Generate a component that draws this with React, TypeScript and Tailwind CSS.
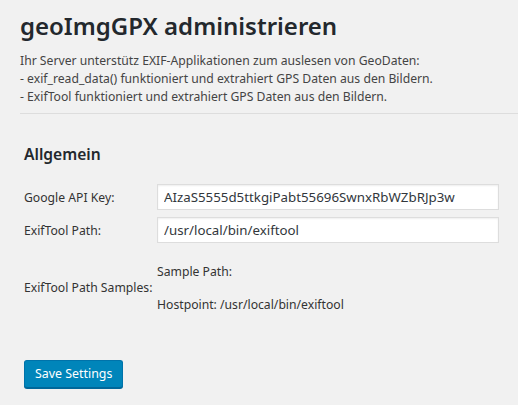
import React from 'react';

const font = "font-['Noto_Sans',sans-serif]";

function FieldRow({ label, value }: { label: string; value: string }) {
  return (
    <div className="flex items-center">
      <label className="w-[133px] pt-[3px] text-[12.2px] text-[#333]">{label}</label>
      <input
        readOnly
        value={value}
        className="h-[26px] w-[342px] border border-[#ddd] bg-white px-[6px] text-[13.3px] text-[#32373c] shadow-[inset_0_1px_2px_rgba(0,0,0,0.07)] outline-none"
      />
    </div>
  );
}

export default function App() {
  return (
    <div className={`min-h-screen bg-[#f1f1f1] pl-5 pt-[11px] text-[#444] ${font}`}>
      {/* Title + info */}
      <h1 className="text-[24px] leading-[30px] font-semibold text-[#23282d]">geoImgGPX administrieren</h1>
      <div className="mt-[11px] text-[12.2px] leading-[18px]">
        <p>Ihr Server unterstütz EXIF-Applikationen zum auslesen von GeoDaten:</p>
        <p>- exif_read_data() funktioniert und extrahiert GPS Daten aus den Bildern.</p>
        <p>- ExifTool funktioniert und extrahiert GPS Daten aus den Bildern.</p>
      </div>
      <hr className="mt-[7px] border-0 border-t border-[#ddd]" />

      {/* Settings */}
      <div className="pl-1">
        <h2 className="mt-[30px] text-[15.6px] leading-[20px] font-semibold text-[#23282d]">Allgemein</h2>
        <div className="mt-[20px] flex flex-col gap-[7px]">
          <FieldRow label="Google API Key:" value="AIzaS5555d5ttkgiPabt55696SwnxRbWZbRJp3w" />
          <FieldRow label="ExifTool Path:" value="/usr/local/bin/exiftool" />
        </div>
        <div className="mt-5 flex items-center text-[12.2px] text-[#333]">
          <span className="w-[133px]">ExifTool Path Samples:</span>
          <div className="flex flex-col gap-[15px] leading-[18px]">
            <span>Sample Path:</span>
            <span>Hostpoint: /usr/local/bin/exiftool</span>
          </div>
        </div>
        <button className="mt-[46px] h-[28px] rounded-[3px] border border-[#0073aa] border-b-[#006799] bg-[#0085ba] px-[10px] text-[12.4px] text-white shadow-[0_1px_0_#006799]">
          Save Settings
        </button>
      </div>
    </div>
  );
}
